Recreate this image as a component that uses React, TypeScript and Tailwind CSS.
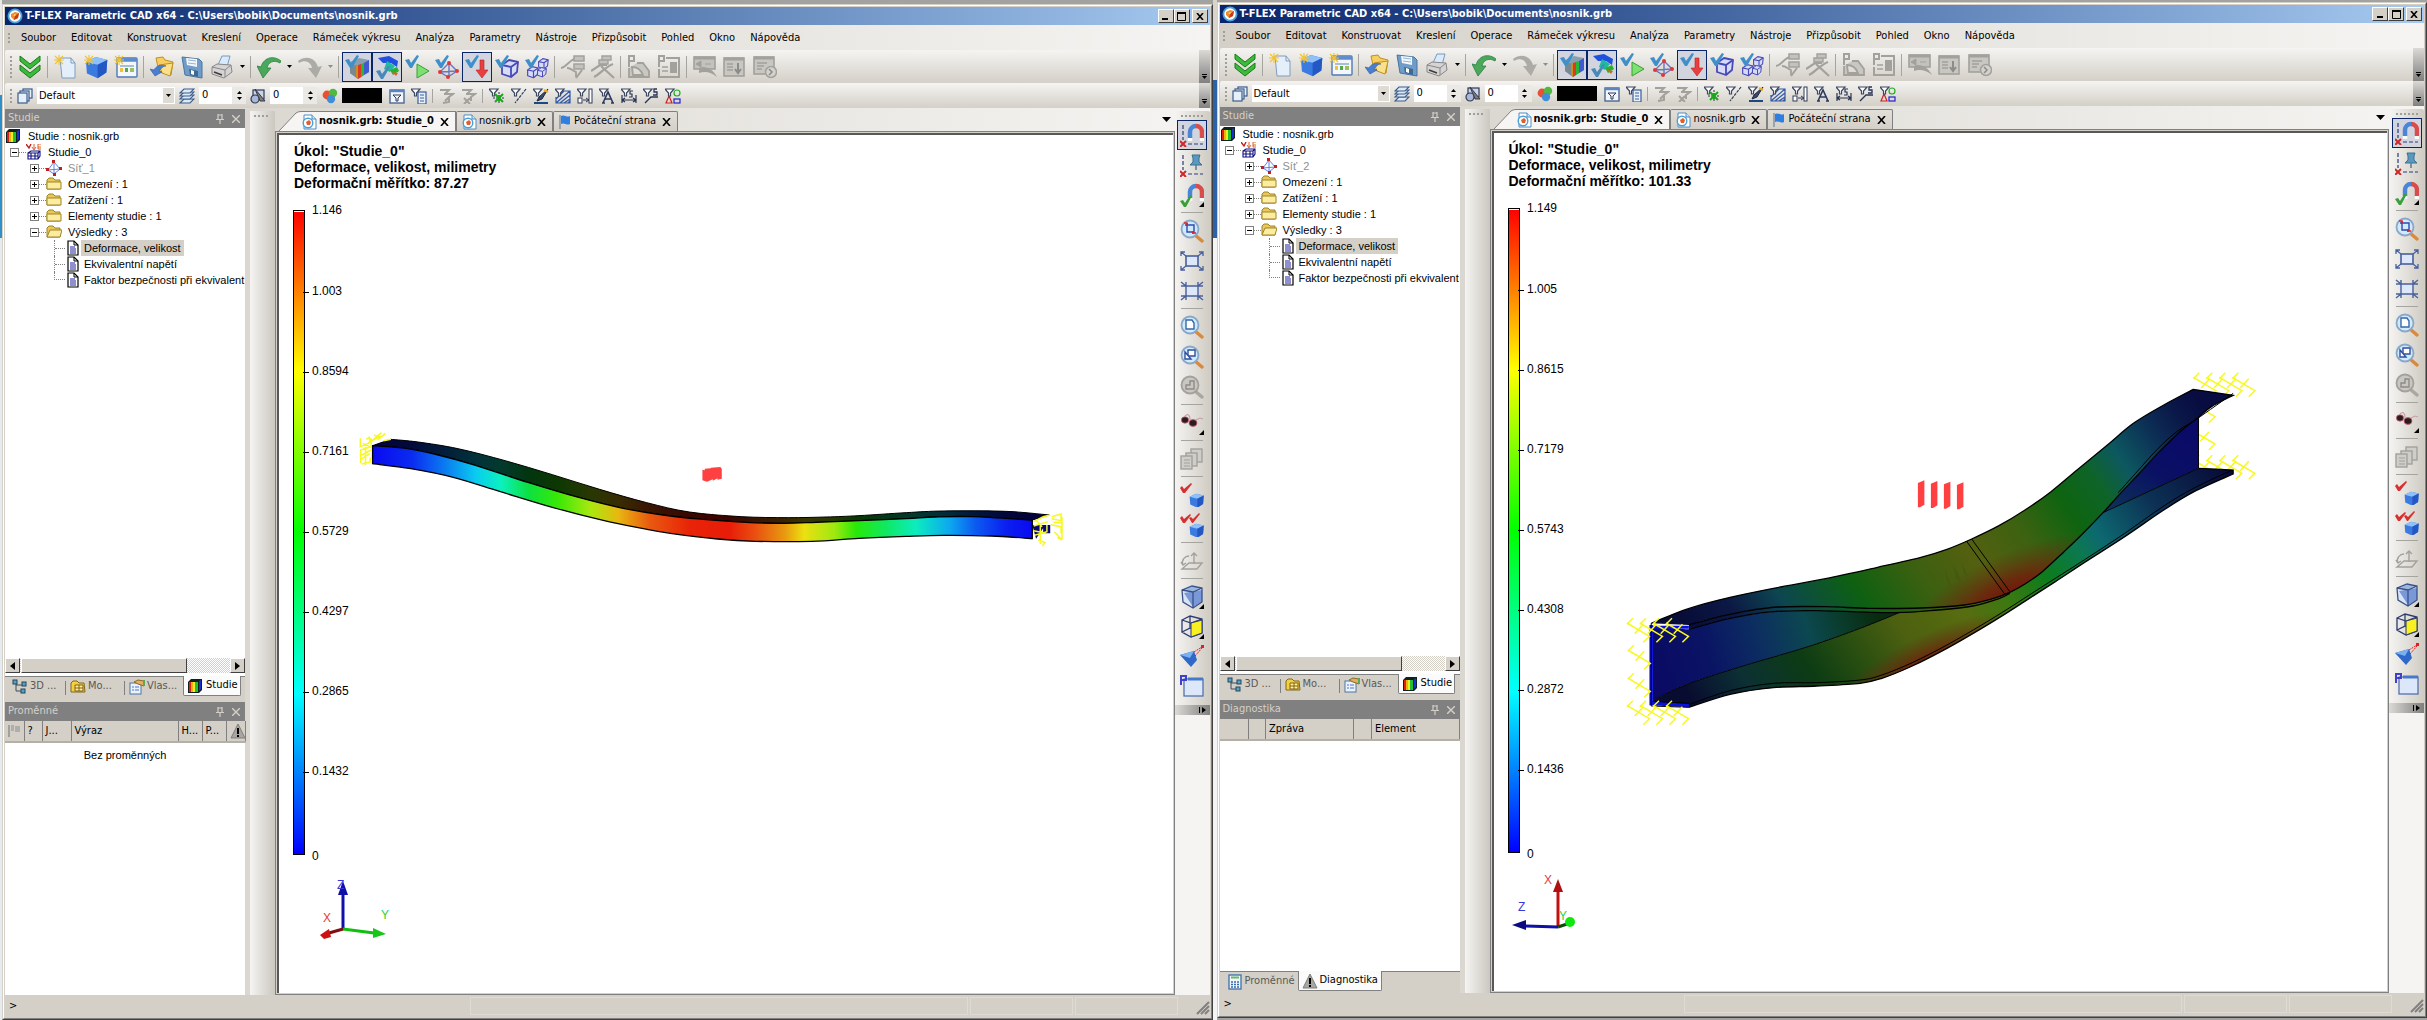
import React, { ReactNode } from "react";

/* ---------- icon helpers ---------- */

function Svg({ s = 24, children }: { s?: number; children: ReactNode }) {
  return (
    <svg width={s} height={s} viewBox={`0 0 ${s} ${s}`} fill="none" aria-hidden="true" className="shrink-0">
      {children}
    </svg>
  );
}

const Cube = ({ x = 0, y = 0, k = 1 }: { x?: number; y?: number; k?: number }) => (
  <g transform={`translate(${x} ${y}) scale(${k})`}>
    <path d="M1 6L11 1L23 4L22 17L13 23L2 18Z" fill="#3b7ae0" />
    <path d="M1 6L11 1L23 4L13 9Z" fill="#8fc0f8" />
    <path d="M13 9L23 4L22 17L13 23Z" fill="#2257c4" />
  </g>
);
const Spark = () => (
  <path d="M5 0V10M0 5H10M1 1L9 9M9 1L1 9" stroke="#f2c230" strokeWidth="1.1" />
);
const Check = ({ c = "#3f8fcb" }: { c?: string }) => (
  <path d="M0 5L4 4L6 8L12 0L14 1L7 13L5 13Z" fill={c} />
);
const Lens = ({ gray = false, children }: { gray?: boolean; children?: ReactNode }) => (
  <Svg>
    <path d="M15 16L22 22" stroke={gray ? "#a9a7a2" : "#d98a3c"} strokeWidth="3.4" strokeLinecap="round" />
    <circle cx="10" cy="10" r="8.5" fill={gray ? "#c9c7c2" : "#cfeafc"} stroke={gray ? "#a3a19c" : "#8aa6c8"} strokeWidth="1.8" />
    {children}
  </Svg>
);
const Magnet = () => (
  <g strokeWidth="4.5">
    <path d="M10 15V9A6 6 0 0 1 16 3" stroke="#4b86d6" />
    <path d="M22 15V9A6 6 0 0 0 16 3" stroke="#d84c4c" />
    <path d="M10 15V18M22 15V18" stroke="#fafafa" />
  </g>
);
const RedX = () => <path d="M0 18L6 24M6 18L0 24" stroke="#cc2a2a" strokeWidth="2" />;
const Guides = () => (
  <g stroke="#2c3a78" strokeWidth="1.2">
    <path d="M3 2V17" strokeDasharray="4 2" />
    <path d="M8 21H23" strokeDasharray="4 2" />
  </g>
);
const Corner = () => <path d="M24 19V24H19Z" fill="#000" />;

const AppIcon = ({ s = 16 }: { s?: number }) => (
  <svg width={s} height={s} viewBox="0 0 16 16" className="shrink-0" aria-hidden="true">
    <circle cx="8" cy="8" r="6.6" fill="#fff" stroke="#4aa0d8" strokeWidth="1.8" />
    <path d="M4 6L8 4L12 5L11 10L7 12L4 9Z" fill="#f08a2c" />
    <path d="M8 8L12 5L11 10L7 12Z" fill="#c8381c" />
    <path d="M6 7L9 6L8 8Z" fill="#ffe08a" />
  </svg>
);
const DocIcon = () => (
  <Svg s={16}>
    <path d="M3 1H11L15 5V15H3Z" fill="#fff" stroke="#4d8cc4" />
    <path d="M11 1V5H15" stroke="#4d8cc4" fill="#cfe6f8" />
    <circle cx="7" cy="9" r="4.8" fill="#fff" stroke="#4aa0d8" strokeWidth="1.4" />
    <path d="M5 8L8 6L10 8L9 11L6 11Z" fill="#e0602c" />
  </Svg>
);
const FlagIcon = () => (
  <Svg s={16}>
    <path d="M2 1V15" stroke="#8a98a8" strokeWidth="1.6" />
    <path d="M3 2C6 0 9 4 12 2V10C9 12 6 8 3 10Z" fill="#2f7fe0" />
  </Svg>
);
const RainbowCube = () => (
  <Svg s={16}>
    <path d="M1 4L4 1H15V12L12 15H1Z" fill="#102020" />
    <path d="M2 4H4V14H2Z" fill="#e02010" />
    <path d="M4 4H6V14H4Z" fill="#f0b010" />
    <path d="M6 4H8V14H6Z" fill="#e8f020" />
    <path d="M8 4H11V14H8Z" fill="#20c030" />
    <path d="M12 3L14 2V11L12 13Z" fill="#1830d0" />
  </Svg>
);

/* ---------- main toolbar icons ---------- */

const icoChevrons = (
  <Svg>
    <path d="M2 1L12 9L22 1V6L12 14L2 6Z" fill="#3cba3c" stroke="#1b7a1b" />
    <path d="M2 10L12 18L22 10V15L12 23L2 15Z" fill="#3cba3c" stroke="#1b7a1b" />
  </Svg>
);
const icoNew = (
  <Svg>
    <path d="M6 3H17L21 8V23H8Z" fill="#e4effa" stroke="#7f9cc0" />
    <path d="M17 3V8H21" stroke="#7f9cc0" />
    <Spark />
  </Svg>
);
const icoNewCube = (
  <Svg>
    <Cube x={1} y={1} k={0.97} />
    <Spark />
  </Svg>
);
const icoNewCal = (
  <Svg>
    <rect x="3" y="3" width="20" height="19" rx="1" fill="#f3f6fa" stroke="#4f79b4" strokeWidth="1.4" />
    <path d="M3 5H23" stroke="#5b8bd0" strokeWidth="3.5" />
    <path d="M6 11H20" stroke="#a9bdd6" strokeWidth="2" />
    <path d="M6 15H9" stroke="#f0c040" strokeWidth="4" />
    <path d="M11 15H14" stroke="#58a848" strokeWidth="4" />
    <path d="M16 15H20" stroke="#9ac060" strokeWidth="4" />
    <Spark />
  </Svg>
);
const icoOpen = (
  <Svg>
    <path d="M6 3L13 2L15 5L23 7L21 20L9 17Z" fill="#f6cf60" stroke="#c18f24" />
    <path d="M9 10L23 8L20 21L12 18Z" fill="#fbe08a" stroke="#c18f24" />
    <path d="M0 14L5 21L12 17L9 16C12 12 14 11 16 11C11 9 6 11 4 15Z" fill="#4a7fd0" stroke="#2c58a0" strokeWidth=".6" />
  </Svg>
);
const icoSave = (
  <Svg>
    <path d="M2 2L19 4L22 7V23L5 20Z" fill="#6f9cc8" stroke="#4b749e" />
    <path d="M6 3L17 4V12L7 10Z" fill="#f3f7fb" />
    <path d="M8 5L16 6M8 8L16 9" stroke="#9ab4cc" />
    <path d="M9 14L18 16V22L10 20Z" fill="#41688f" />
    <path d="M11 15L14 16V20L11 19Z" fill="#fff" />
  </Svg>
);
const icoPrint = (
  <Svg>
    <path d="M8 10L12 1H20L17 12Z" fill="#d8eafc" stroke="#7b98bb" />
    <path d="M2 12L7 9L21 10L22 17L14 23L2 19Z" fill="#d6d4d2" stroke="#87858a" />
    <path d="M2 12L15 15L21 10M15 15V22" stroke="#87858a" />
    <path d="M4 17L12 20" stroke="#3b3b40" strokeWidth="1.6" />
  </Svg>
);
const icoUndo = (
  <Svg>
    <path d="M6 23L0 11L4 12C6 4 15 -1 24 6L23 8C16 4 11 8 10 13L14 13Z" fill="#4aa85c" stroke="#2b7e3e" strokeWidth=".8" />
  </Svg>
);
const icoRedo = (
  <Svg>
    <path d="M18 23L24 11L20 12C18 4 9 -1 0 6L1 8C8 4 13 8 14 13L10 13Z" fill="#adaba6" />
  </Svg>
);
const icoCheckCube = (
  <Svg>
    <path d="M5 7L14 3L24 5V17L13 24L5 18Z" fill="#8aa0ae" />
    <path d="M5 9L13 11V24L5 18Z" fill="#7a8894" />
    <path d="M13 10L16 9V22L13 24Z" fill="#e03820" />
    <path d="M11 10L13 11V24L11 22Z" fill="#c89020" />
    <path d="M16 9L19 8V20L16 22Z" fill="#28b838" />
    <path d="M19 8L24 5V17L19 20Z" fill="#4058d0" />
    <Check />
  </Svg>
);
const icoCheckBeam = (
  <Svg>
    <path d="M3 3L14 1L23 6L22 12L16 8L8 8Z" fill="#1f50e0" />
    <path d="M12 6L20 11L15 17L9 14Z" fill="#20b8a0" />
    <path d="M15 15L22 12L24 16L18 20Z" fill="#28b030" />
    <path d="M17 17L23 18L21 21Z" fill="#e06020" />
    <g transform="translate(1 11)">
      <Check c="#4a88b8" />
    </g>
  </Svg>
);
const icoCheckPlay = (
  <Svg>
    <path d="M12 9L24 16L12 23Z" fill="#7ee070" stroke="#38a038" />
    <Check />
  </Svg>
);
const icoCheckMesh = (
  <Svg>
    <path d="M14 8L5 17L13 22L22 16ZM14 8V22M5 17L22 16" stroke="#6a76c0" strokeWidth="1.4" />
    <g fill="#e03838">
      <circle cx="14" cy="8" r="2" />
      <circle cx="5" cy="17" r="2" />
      <circle cx="13" cy="22" r="2" />
      <circle cx="22" cy="16" r="2" />
    </g>
    <Check />
  </Svg>
);
const icoCheckArrow = (
  <Svg>
    <path d="M15 5H19V15H23L17 23L11 15H15Z" fill="#e84040" stroke="#b82020" strokeWidth=".6" />
    <Check />
  </Svg>
);
const Wire = ({ x = 0, y = 0, k = 1 }: { x?: number; y?: number; k?: number }) => (
  <g transform={`translate(${x} ${y}) scale(${k})`} fill="#d4dcf6" stroke="#4a48b8" strokeWidth="1.8" strokeLinejoin="round">
    <path d="M1 6L8 1L17 3L16 13L10 18L1 15Z" />
    <path d="M1 6L10 8L17 3M10 8V18" />
  </g>
);
const icoCheckWire = (
  <Svg>
    <Wire x={6} y={4} />
    <Check />
  </Svg>
);
const icoCheckWires = (
  <Svg>
    <Wire x={13} y={3} k={0.6} />
    <Wire x={2} y={11} k={0.65} />
    <Wire x={12} y={12} k={0.55} />
    <Check />
  </Svg>
);
const G = "#a3a19c";
const icoG1 = (
  <Svg>
    <path d="M0 13C6 12 8 5 14 4M6 13C10 13 12 16 15 17V22" stroke={G} strokeWidth="1.8" />
    <path d="M13 1H23V6H13ZM13 9H23V14H13Z" fill="#c4c2bd" stroke={G} strokeWidth="1.5" />
    <path d="M21 15L15 23" stroke={G} strokeWidth="2" />
  </Svg>
);
const icoG2 = (
  <Svg>
    <path d="M11 1H20V5H11ZM8 5H17V9H8Z" fill="#c4c2bd" stroke={G} strokeWidth="1.4" />
    <path d="M0 16L9 10H16M3 22C8 20 14 12 22 9M10 11L23 23" stroke={G} strokeWidth="2.2" />
  </Svg>
);
const icoG3 = (
  <Svg>
    <path d="M2 12V1H7V6H2" stroke={G} strokeWidth="2" />
    <path d="M2 13V22H22V16L16 8H10M5 12C10 12 14 15 16 20H6Z" stroke={G} strokeWidth="1.8" fill="#c9c7c2" />
  </Svg>
);
const icoG4 = (
  <Svg>
    <path d="M2 12V1H7V6H2" stroke={G} strokeWidth="2" />
    <path d="M9 3H22V22H2V14" stroke={G} strokeWidth="2" />
    <path d="M13 7H20V18H13Z" fill={G} />
    <path d="M5 12H11M5 16H11" stroke={G} strokeWidth="1.5" />
  </Svg>
);
const icoG5 = (
  <Svg>
    <rect x="1" y="2" width="21" height="12" fill="#c4c2bd" stroke={G} strokeWidth="1.6" />
    <path d="M1 3H22" stroke={G} strokeWidth="3" />
    <path d="M3 9L8 6V12ZM12 9H18" stroke={G} fill={G} />
    <path d="M6 13C12 10 20 14 24 22C18 17 12 16 6 18Z" fill={G} />
  </Svg>
);
const icoG6 = (
  <Svg>
    <rect x="1" y="3" width="20" height="18" fill="#c9c7c2" stroke={G} strokeWidth="1.6" />
    <path d="M1 4H21" stroke={G} strokeWidth="3" />
    <path d="M4 9H10M4 12H10M4 15H10" stroke={G} strokeWidth="1.4" />
    <path d="M15 8V17M12 14L15 18L18 14" stroke="#8e8c88" strokeWidth="2" />
  </Svg>
);
const icoG7 = (
  <Svg>
    <rect x="1" y="2" width="20" height="17" fill="#c9c7c2" stroke={G} strokeWidth="1.6" />
    <path d="M1 3H21" stroke={G} strokeWidth="3" />
    <path d="M4 8H14M4 11H11M4 14H9" stroke={G} strokeWidth="1.4" />
    <circle cx="18" cy="17" r="5.5" fill="#d4d2cd" stroke={G} strokeWidth="1.5" />
    <path d="M16 14L19 17L16 20" stroke="#8e8c88" strokeWidth="1.5" />
  </Svg>
);

type Tool = { label: string; icon?: ReactNode; pressed?: boolean; menu?: boolean; off?: boolean; sep?: boolean };
const sep: Tool = { label: "", sep: true };

const MAIN_TOOLS: Tool[] = [
  { label: "Aktualizovat", icon: icoChevrons },
  sep,
  { label: "Nový", icon: icoNew },
  { label: "Nový 3D model", icon: icoNewCube },
  { label: "Nový z prototypu", icon: icoNewCal },
  sep,
  { label: "Otevřít", icon: icoOpen },
  { label: "Uložit", icon: icoSave },
  { label: "Tisk", icon: icoPrint, menu: true },
  sep,
  { label: "Zpět", icon: icoUndo, menu: true },
  { label: "Znovu", icon: icoRedo, menu: true, off: true },
  sep,
  { label: "Studie", icon: icoCheckCube, pressed: true },
  { label: "Výsledky", icon: icoCheckBeam, pressed: true },
  { label: "Výpočet", icon: icoCheckPlay },
  { label: "Síť", icon: icoCheckMesh },
  { label: "Zatížení", icon: icoCheckArrow, pressed: true },
  { label: "Těleso", icon: icoCheckWire },
  { label: "Tělesa", icon: icoCheckWires },
  sep,
  { label: "Strom", icon: icoG1, off: true },
  { label: "Zrušit strom", icon: icoG2, off: true },
  sep,
  { label: "Parametry plochy", icon: icoG3, off: true },
  { label: "Parametry okna", icon: icoG4, off: true },
  sep,
  { label: "Animace", icon: icoG5, off: true },
  { label: "Export", icon: icoG6, off: true },
  { label: "Historie", icon: icoG7, off: true },
];

/* ---------- filter toolbar icons ---------- */

const Funnel = ({ c = "#3c4660" }: { c?: string }) => (
  <path d="M0 1H9L5.5 5V8H3.5V5Z" stroke={c} strokeWidth="1.2" fill="#fff" />
);
const icoCopies = (
  <Svg s={16}>
    <g fill="#e6f0fa" stroke="#3c5c8c" strokeWidth="1.2">
      <rect x="6" y="1" width="9" height="9" />
      <rect x="3" y="3" width="9" height="10" />
      <rect x="1" y="5" width="9" height="10" />
    </g>
  </Svg>
);
const icoLayers = (
  <Svg s={16}>
    <g fill="#dceaf6" stroke="#3c5c8c" strokeWidth="1.1">
      <path d="M1 15L5 11H15L11 15Z" />
      <path d="M1 11L5 7H15L11 11Z" />
      <path d="M1 8L5 4H15L11 8Z" />
      <path d="M1 5L5 1H15L11 5Z" />
    </g>
  </Svg>
);
const icoShapes = (
  <Svg s={16}>
    <rect x="3" y="2" width="11" height="9" fill="#c8d4e8" stroke="#303a58" strokeWidth="1.2" />
    <path d="M5 1L15 13H10Z" fill="#8a7868" stroke="#303a58" />
    <circle cx="5" cy="11" r="4" fill="#a8b8d8" stroke="#303a58" strokeWidth="1.2" />
  </Svg>
);
const icoRgb = (
  <Svg s={16}>
    <circle cx="5" cy="7" r="4.4" fill="#e85030" />
    <circle cx="11" cy="5" r="4.2" fill="#50b840" />
    <circle cx="9" cy="11" r="4.2" fill="#3f8fd8" />
  </Svg>
);
const FILTERS: Tool[] = [
  {
    label: "Filtr okna",
    icon: (
      <Svg s={16}>
        <rect x="1" y="2" width="14" height="13" fill="#f2f6fb" stroke="#4a6894" strokeWidth="1.4" />
        <path d="M1 3H15" stroke="#5b84c0" strokeWidth="2.4" />
        <path d="M4 7H12L9 10V13H7V10Z" stroke="#303a58" />
      </Svg>
    ),
  },
  {
    label: "Seznam filtrů",
    icon: (
      <Svg s={16}>
        <rect x="7" y="4" width="8" height="12" fill="#e6f0fa" stroke="#3c5c9c" strokeWidth="1.2" />
        <path d="M9 7H13M9 10H13M9 13H13" stroke="#3c5c9c" />
        <Funnel />
      </Svg>
    ),
  },
  sep,
  { label: "Použít filtr", off: true, icon: <Svg s={16}><path d="M1 2H10L6 6M5 6H14L10 9V14L4 15M10 9L6 13" stroke={G} strokeWidth="2" /></Svg> },
  { label: "Vypnout filtr", off: true, icon: <Svg s={16}><path d="M1 2H10L6 6M5 6H14L10 9V13M3 10L9 16M9 10L3 16" stroke={G} strokeWidth="2" /></Svg> },
  sep,
  { label: "Uzly", icon: <Svg s={16}><Funnel /><path d="M10 4V16M4 10H16" stroke="#283048" strokeDasharray="2 1" /><path d="M6 6L14 14M14 6L6 14M10 7V13" stroke="#18a818" strokeWidth="2" /></Svg> },
  { label: "Čáry", icon: <Svg s={16}><Funnel /><path d="M15 1L4 15" stroke="#303a58" strokeWidth="1.2" strokeDasharray="3 1" /></Svg> },
  { label: "Grafika", icon: <Svg s={16}><Funnel /><path d="M15 1L6 9L4 13L9 11Z" fill="#3a4a70" stroke="#202838" /><path d="M11 2L15 4" stroke="#f0b020" strokeWidth="2" /><path d="M1 15H15" stroke="#1c4884" strokeWidth="2" /></Svg> },
  { label: "Šrafy", icon: <Svg s={16}><path d="M2 3H15V15H1V9M1 15L15 3M5 15L15 7M9 15L15 11M1 11L9 3M13 15L15 13" stroke="#3058a8" strokeWidth="1.2" /><Funnel /></Svg> },
  { label: "Kóty bloku", icon: <Svg s={16}><Funnel /><rect x="12" y="1" width="3" height="14" stroke="#303a58" fill="#fff" /><rect x="1" y="10" width="4" height="5" stroke="#303a58" fill="#fff" /><path d="M6 12H12M9 10L12 12L9 14" stroke="#303a58" /></Svg> },
  { label: "Texty", icon: <Svg s={16}><path d="M4 15L9 4L14 15M6 11H12M3 15H6M12 15H15" stroke="#2c3a60" strokeWidth="1.6" /><Funnel /></Svg> },
  { label: "Kóty", icon: <Svg s={16}><path d="M1 7V15M15 7V15M1 12H15M4 10L1 12L4 14M12 10L15 12L12 14M12 3H9V6H11V9H8" stroke="#283454" strokeWidth="1.2" /><Funnel /></Svg> },
  { label: "Drsnost", icon: <Svg s={16}><path d="M2 15L8 9H15M14 1H11V4H14V7H10" stroke="#283454" strokeWidth="1.3" /><Funnel /></Svg> },
  { label: "Prvky", icon: <Svg s={16}><path d="M4 8L7 15H1Z" stroke="#d02020" strokeWidth="1.2" /><rect x="9" y="11" width="6" height="4" stroke="#2020d0" strokeWidth="1.2" /><circle cx="12" cy="5" r="3" stroke="#20b020" strokeWidth="1.2" /><Funnel /></Svg> },
];

/* ---------- view toolbar icons ---------- */

const VIEW_TOOLS: Tool[] = [
  { label: "Přichycení", pressed: true, icon: <Svg><Guides /><Magnet /><RedX /></Svg> },
  { label: "Připnout", icon: <Svg><Guides /><path d="M12 2H20L19 5V9L22 12H10L13 9V5Z" fill="#5a98c0" stroke="#3c7090" /><path d="M16 12V17" stroke="#607888" strokeWidth="1.5" /><RedX /></Svg> },
  { label: "Nastavení přichycení", icon: <Svg><Magnet /><path d="M0 18L3 17L5 20L10 12L12 13L6 24L4 24Z" fill="#38a038" /><Corner /></Svg> },
  sep,
  { label: "Zvětšit oblast", icon: <Lens><path d="M5 6H14V13H7V4" stroke="#3048b0" strokeWidth="1.4" /><path d="M4 4H7V7M13 12V15M16 14L12 14" stroke="#e02020" strokeWidth="1.4" /></Lens> },
  { label: "Vše", icon: <Svg><rect x="6" y="7" width="12" height="10" fill="#dce8fa" stroke="#48609c" strokeWidth="1.6" /><path d="M1 7V3H5M1 3L6 7M19 3H23V7M23 3L18 7M1 17V21H5M1 21L6 17M19 21H23V17M23 21L18 17" stroke="#48609c" strokeWidth="1.3" /></Svg> },
  { label: "Výběr", icon: <Svg><rect x="6" y="7" width="12" height="10" fill="#dce8fa" /><path d="M1 7H23M1 17H23M6 3V21M18 3V21M1 3L6 7M23 3L18 7M1 21L6 17M23 21L18 17" stroke="#48609c" strokeWidth="1.4" /></Svg> },
  sep,
  { label: "Stránka", icon: <Lens><path d="M6 5H12L14 8V14H6Z" fill="#fff" stroke="#3868a8" strokeWidth="1.4" /></Lens> },
  { label: "Objekty", icon: <Lens><path d="M8 5H15V11H8Z" fill="#fff" stroke="#30509c" strokeWidth="1.4" /><path d="M5 7V14H11Z" fill="#fff" stroke="#30509c" strokeWidth="1.4" /></Lens> },
  { label: "Předchozí", off: true, icon: <Lens gray><path d="M6 14V10H10V6H14V14Z" stroke="#8e8c88" strokeWidth="1.4" /></Lens> },
  sep,
  { label: "Pohled", icon: <Svg><ellipse cx="5" cy="9" rx="3.6" ry="3.2" fill="#2a1c20" stroke="#d06070" strokeWidth=".8" /><ellipse cx="13" cy="12" rx="4" ry="3.4" fill="#2a1c20" stroke="#d06070" strokeWidth=".8" /><path d="M5 5C8 2 10 4 10 9M16 9L20 7L23 8" stroke="#c8a0a4" strokeWidth="1.1" /><Corner /></Svg> },
  sep,
  { label: "Stránky", off: true, icon: <Svg><g fill="#d0cec9" stroke={G} strokeWidth="1.4"><rect x="11" y="2" width="11" height="13" /><rect x="6" y="6" width="11" height="13" /><rect x="1" y="9" width="11" height="13" /></g><path d="M4 13H10M4 16H10M4 19H10" stroke={G} /></Svg> },
  sep,
  { label: "Přepočítat", icon: <Svg><Cube x={9} y={10} k={0.64} /><path d="M0 5L2 3L4 6L11 0L12 1L5 10L3 10Z" fill="#d83030" /></Svg> },
  { label: "Přepočítat vše", icon: <Svg><Cube x={9} y={10} k={0.64} /><path d="M0 5L2 3L4 6L10 1L11 2L5 10L3 10ZM9 5L11 4L13 6L19 0L20 1L13 10L12 10Z" fill="#d83030" /></Svg> },
  sep,
  { label: "Pracovní rovina", off: true, icon: <Svg><path d="M2 20L9 14H22L17 20ZM14 15V4M11 7L14 4L17 7M3 16C1 11 5 7 9 7M1 13L3 16L6 14" stroke={G} strokeWidth="1.4" /></Svg> },
  sep,
  { label: "Stínování", icon: <Svg><path d="M2 5L12 1L22 3V17L13 23L3 17Z" fill="#d8e4f4" /><path d="M4 8L22 5V17L13 22Z" fill="#7898d8" /><path d="M2 5L12 1L22 3L13 7Z" fill="#98b8e0" /><path d="M2 5L12 1L22 3V17L13 23L3 17ZM2 5L13 7L22 3M13 7V23" stroke="#3c5088" strokeWidth="1.3" /><Corner /></Svg> },
  { label: "Plocha", icon: <Svg><path d="M2 5L10 1L22 4V18L11 22L2 17ZM2 5L11 8L22 4M10 1V13L2 17M10 13L22 18" stroke="#2c3a70" strokeWidth="1.3" /><path d="M11 8L22 5V18L11 22Z" fill="#f8f020" stroke="#2c3a70" /><Corner /></Svg> },
  { label: "Kamera", icon: <Svg><path d="M0 10L14 6L17 15L11 22Z" fill="#2f68c8" /><path d="M0 10L14 6L10 13Z" fill="#78b0f0" /><path d="M14 7L22 2M15 11L22 3" stroke="#e02020" strokeDasharray="2 1" /><path d="M21 0H24V3H21Z" fill="#e02020" /></Svg> },
  { label: "Nové okno", icon: <Svg><rect x="4" y="4" width="19" height="17" fill="#dce8fa" stroke="#4868a8" strokeWidth="1.2" /><path d="M8 4H23" stroke="#4878c8" strokeWidth="3" /><path d="M1 10V1H6V5H2" stroke="#4040d0" strokeWidth="2" /></Svg> },
];

/* ---------- small chrome pieces ---------- */

const Down = ({ off = false }: { off?: boolean }) => (
  <svg width="5" height="3" viewBox="0 0 5 3" aria-hidden="true">
    <path d="M0 0H5L2.5 3Z" fill={off ? "#908e88" : "#000"} />
  </svg>
);

function Grip({ rows }: { rows: number }) {
  return (
    <span className="flex w-2 shrink-0 flex-col items-center justify-center gap-[2px]">
      {Array.from({ length: rows }, (_, i) => (
        <i key={i} className="h-[2px] w-[2px] bg-[#a09e98]" />
      ))}
    </span>
  );
}

function ToolButton({ t }: { t: Tool }) {
  return (
    <>
      <button
        type="button"
        title={t.label}
        aria-label={t.label}
        disabled={t.off}
        className={
          t.pressed
            ? "flex size-[30px] shrink-0 items-center justify-center border border-[#0a246a] bg-[#d2d5de]"
            : "flex size-[30px] shrink-0 items-center justify-center"
        }
      >
        {t.icon}
      </button>
      {t.menu && (
        <button type="button" aria-label={t.label + " – nabídka"} disabled={t.off} className="flex h-[30px] w-[11px] shrink-0 items-center justify-center">
          <Down off={t.off} />
        </button>
      )}
    </>
  );
}

function Overflow() {
  return (
    <button type="button" aria-label="Další tlačítka" className="ml-auto flex w-[11px] shrink-0 flex-col items-center justify-end gap-px bg-linear-to-b from-[#dcdad6] to-[#808080] pb-1">
      <i className="h-px w-[5px] bg-black" />
      <Down />
    </button>
  );
}

const MENU = ["Soubor", "Editovat", "Konstruovat", "Kreslení", "Operace", "Rámeček výkresu", "Analýza", "Parametry", "Nástroje", "Přizpůsobit", "Pohled", "Okno", "Nápověda"];
const BAR = "bg-linear-to-b from-[#f5f4f2] to-[#d4d0c8]";

function TitleBar() {
  const btn = "flex h-[14px] w-4 items-center justify-center border border-t-white border-l-white border-r-[#404040] border-b-[#404040] bg-[#d4d0c8]";
  return (
    <header className="flex h-[18px] items-center bg-linear-to-r from-[#0a246a] to-[#a6caf0] pr-[2px] pl-[2px]">
      <AppIcon />
      <h1 className="ml-[2px] flex-1 text-[11px] leading-[18px] font-bold whitespace-nowrap text-white">
        T-FLEX Parametric CAD x64 - C:\Users\bobik\Documents\nosnik.grb
      </h1>
      <button type="button" aria-label="Minimalizovat" className={btn}>
        <svg width="9" height="8" viewBox="0 0 9 8"><path d="M1 6H7V8H1Z" /></svg>
      </button>
      <button type="button" aria-label="Maximalizovat" className={btn}>
        <svg width="9" height="9" viewBox="0 0 9 9"><path d="M.5 1V8.500H8.500V1M0 1H9" fill="none" stroke="#000" /><path d="M0 0H9V2H0Z" /></svg>
      </button>
      <button type="button" aria-label="Zavřít" className={btn + " ml-[2px]"}>
        <svg width="8" height="7" viewBox="0 0 8 7"><path d="M1 0L7 7M7 0L1 7" stroke="#000" strokeWidth="1.6" /></svg>
      </button>
    </header>
  );
}

function Spin({ label }: { label: string }) {
  return (
    <label className="flex h-[17px] w-[47px] bg-white">
      <input aria-label={label} defaultValue="0" className="w-[33px] bg-transparent pl-[3px] text-[11px] outline-none" />
      <span className="flex w-[14px] flex-col items-center justify-center gap-[3px] bg-[#ebe9e5]">
        <svg width="5" height="3" viewBox="0 0 5 3"><path d="M0 3H5L2.500 0Z" /></svg>
        <Down />
      </span>
    </label>
  );
}

function FilterBar() {
  return (
    <div className={"flex h-[25px] items-stretch rounded-l-xs pl-[2px] " + BAR}>
      <Grip rows={4} />
      <div className="flex items-center pl-[2px]">
        {icoCopies}
        <span className="relative ml-1 flex h-[17px] w-[138px] bg-white">
          <select aria-label="Styl" className="w-full appearance-none bg-transparent pl-[2px] text-[11px] leading-[17px] outline-none">
            <option>Default</option>
          </select>
          <span className="pointer-events-none absolute inset-y-0 right-0 flex w-[13px] items-center justify-center border border-white bg-[#dedbd5]">
            <Down />
          </span>
        </span>
        <span className="mx-1">{icoLayers}</span>
        <Spin label="Vrstva" />
        <span className="mx-1">{icoShapes}</span>
        <Spin label="Priorita" />
        <span className="mr-1 ml-[5px]">{icoRgb}</span>
        <button type="button" aria-label="Barva" className="mr-1 h-[15px] w-10 bg-black" />
        {FILTERS.map((t, i) =>
          t.sep ? (
            <i key={i} className="mr-[3px] ml-[2px] h-[14px] w-px bg-[#a6a49e]" />
          ) : (
            <button key={i} type="button" title={t.label} aria-label={t.label} disabled={t.off} className="flex size-[22px] items-center justify-center">
              {t.icon}
            </button>
          ),
        )}
      </div>
      <Overflow />
    </div>
  );
}

function PanelCaption({ title }: { title: string }) {
  return (
    <div className="flex h-[19px] shrink-0 items-center bg-[#808080] pr-[5px] pl-[3px] text-[11px] text-[#d4d0c8]">
      <h2 className="flex-1">{title}</h2>
      <button type="button" aria-label="Připnout panel" className="mr-2">
        <svg width="8" height="10" viewBox="0 0 8 10" fill="none" stroke="#d4d0c8" strokeWidth="1.2"><path d="M2 0V5M6 0V5M2 1H6M0 5.500H8M4 6V10" /></svg>
      </button>
      <button type="button" aria-label="Zavřít panel">
        <svg width="8" height="8" viewBox="0 0 8 8" stroke="#d4d0c8" strokeWidth="1.4"><path d="M0 0L8 8M8 0L0 8" /></svg>
      </button>
    </div>
  );
}

/* ---------- study tree ---------- */

function Expander({ open }: { open?: boolean }) {
  return (
    <span className="flex items-center">
      <button type="button" aria-label={open ? "Sbalit" : "Rozbalit"} className="flex size-[9px] items-center justify-center border border-[#808080] bg-white">
        <svg width="5" height="5" viewBox="0 0 5 5"><path d={open ? "M0 2H5V3H0Z" : "M0 2H5V3H0ZM2 0H3V5H2Z"} /></svg>
      </button>
      <i className="w-[7px] border-t border-dotted border-[#808080]" />
    </span>
  );
}
const Folder = ({ open = false }: { open?: boolean }) => (
  <Svg s={16}>
    <path d="M1 13V4L3 2H7L9 4H14V13Z" fill="#e8c858" stroke="#a08428" />
    <path d={open ? "M1 13L4 6H16L14 13Z" : "M1 13V6H15V13Z"} fill="#fbeca0" stroke="#a08428" />
  </Svg>
);
const MeshIcon = () => (
  <Svg s={16}>
    <path d="M8 2L2 10L8 14L14 9ZM8 2V14M2 10L14 9" stroke="#6080e0" />
    <path d="M6 0H9V3H6ZM0 8H3V11H0ZM7 13H10V16H7ZM13 7H16V10H13Z" fill="#c02020" />
  </Svg>
);
const StudyIcon = () => (
  <Svg s={16}>
    <path d="M2 9L5 7H14V12L12 15H2ZM2 12H12M5 9V15M9 9V15M2 9H12L14 7M12 9V15" stroke="#101080" strokeWidth="1.1" />
    <path d="M0 0L3 4L5 0" stroke="#c02020" strokeWidth="1.4" />
    <path d="M8 0V5M6 3L8 6L10 3" stroke="#e06020" />
    <path d="M15 0H12V5H15M12 3H15" stroke="#e06020" />
  </Svg>
);
const PageIcon = () => (
  <Svg s={16}>
    <path d="M3 1H9L13 5V15H3Z" fill="#fff" stroke="#000" strokeWidth="1.2" />
    <path d="M9 1V5H13" stroke="#000" />
    <path d="M5 7H10M5 9H11M5 11H11M5 13H11" stroke="#2020a0" />
  </Svg>
);

function StudyTree({ mesh }: { mesh: string }) {
  const row = "flex h-4 items-center whitespace-nowrap";
  const groups = ["Omezení : 1", "Zatížení : 1", "Elementy studie : 1"];
  return (
    <ul className="min-h-0 flex-1 overflow-hidden bg-white pb-2 font-['Liberation_Sans',sans-serif] text-[11px] leading-4">
      <li className={row}>
        <RainbowCube />
        <span className="ml-[7px]">Studie : nosnik.grb</span>
      </li>
      <li className="pl-[5px]">
        <div className={row}>
          <Expander open />
          <StudyIcon />
          <span className="ml-[6px]">Studie_0</span>
        </div>
        <ul className="ml-1">
          <li className="ml-4">
            <div className={row}>
              <Expander />
              <MeshIcon />
              <span className="ml-[6px] text-[#909090]">{mesh}</span>
            </div>
          </li>
          {groups.map((g) => (
            <li key={g} className="ml-4">
              <div className={row}>
                <Expander />
                <Folder />
                <span className="ml-[6px]">{g}</span>
              </div>
            </li>
          ))}
          <li className="ml-4">
            <div className={row}>
              <Expander open />
              <Folder open />
              <span className="ml-[6px]">Výsledky : 3</span>
            </div>
            <ul className="ml-6">
              {["Deformace, velikost", "Ekvivalentní napětí", "Faktor bezpečnosti při ekvivalent"].map((r, i) => (
                <li key={r} className="flex h-4 items-center whitespace-nowrap">
                  <span className={i === 2 ? "h-2 w-[11px] shrink-0 self-start border-b border-l border-dotted border-[#808080]" : "flex h-4 w-[11px] shrink-0 items-center border-l border-dotted border-[#808080]"}>
                    {i < 2 && <i className="w-full border-t border-dotted border-[#808080]" />}
                  </span>
                  <PageIcon />
                  <span className={i === 0 ? "bg-[#d4d0c8] px-[3px]" : "pl-[3px]"}>{r}</span>
                </li>
              ))}
            </ul>
          </li>
        </ul>
      </li>
    </ul>
  );
}

function HScroll() {
  const b = "flex size-[15px] shrink-0 items-center justify-center border border-t-white border-l-white border-r-[#404040] border-b-[#404040] bg-[#d4d0c8]";
  return (
    <div className="flex h-[15px] shrink-0 bg-[repeating-conic-gradient(#fff_0_25%,#d4d0c8_0_50%)] bg-[length:2px_2px]">
      <button type="button" aria-label="Posunout vlevo" className={b}>
        <svg width="5" height="8" viewBox="0 0 5 8"><path d="M5 0V8L0 4Z" /></svg>
      </button>
      <span className="ml-px w-[166px] border border-t-white border-l-white border-r-[#404040] border-b-[#404040] bg-[#d4d0c8]" />
      <button type="button" aria-label="Posunout vpravo" className={b + " ml-auto"}>
        <svg width="5" height="8" viewBox="0 0 5 8"><path d="M0 0V8L5 4Z" /></svg>
      </button>
    </div>
  );
}

const Tree3D = () => (
  <Svg s={16}>
    <path d="M4 4V12H10M4 6H11" stroke="#404858" />
    <g fill="#58a0c8" stroke="#204858">
      <rect x="1" y="1" width="4" height="4" />
      <rect x="10" y="3" width="4" height="4" />
      <rect x="9" y="10" width="4" height="4" />
    </g>
  </Svg>
);
const ModelIcon = () => (
  <Svg s={16}>
    <path d="M1 4L3 2H7L9 4H14L15 13H1Z" fill="#f4d040" stroke="#806818" />
    <path d="M5 6H13V12H5ZM9 6V12M5 9H13" stroke="#806010" fill="#fff0a0" />
  </Svg>
);
const PropsIcon = () => (
  <Svg s={16}>
    <rect x="1" y="4" width="11" height="11" fill="#eaf2fa" stroke="#4a74a8" />
    <path d="M3 8H5M6 8H10M3 11H5M6 11H10" stroke="#4a74d8" />
    <path d="M5 3L9 1L15 2V7L9 5Z" fill="#e0b060" stroke="#906828" />
    <path d="M14 1H16V7H14Z" fill="#58a858" />
  </Svg>
);
const WarnIcon = () => (
  <Svg s={16}>
    <path d="M8 1L15 15H1Z" fill="#a8a6a2" stroke="#807e7a" />
    <path d="M8 5V11M8 12V14" stroke="#000" strokeWidth="2" />
  </Svg>
);
const CalcIcon = () => (
  <Svg s={16}>
    <rect x="2" y="1" width="12" height="14" fill="#f0f6fc" stroke="#4878b0" strokeWidth="1.4" />
    <path d="M4 3.500H12" stroke="#68b868" strokeWidth="2" />
    <path d="M4 8H12M4 10.500H12M4 13H12" stroke="#3868a8" strokeWidth="1.5" strokeDasharray="2 1" />
  </Svg>
);

function DockTabs() {
  const t = "flex h-[19px] items-center gap-[2px] text-[11px] text-[#5a5854]";
  return (
    <div className="flex h-[26px] shrink-0 items-start border-t border-[#808080] pl-[7px]">
      <button type="button" className={t + " w-[53px]"}><Tree3D />3D ...</button>
      <i className="mt-1 h-[14px] w-px bg-[#808080]" />
      <button type="button" className={t + " w-[58px] pl-1"}><ModelIcon />Mo...</button>
      <i className="mt-1 h-[14px] w-px bg-[#808080]" />
      <button type="button" className={t + " w-[58px] pl-1"}><PropsIcon />Vlas...</button>
      <button type="button" className="-mt-px flex h-5 items-center gap-[3px] rounded-b-xs border border-t-0 border-[#808080] bg-[#fbfbfb] pr-[2px] pl-[3px] text-[11px]">
        <RainbowCube />
        Studie
      </button>
    </div>
  );
}

function HeaderTable({ cols }: { cols: { w: string; c: ReactNode }[] }) {
  return (
    <table className="w-full table-fixed border-collapse bg-[#d4d0c8] text-[11px]">
      <thead>
        <tr className="h-[21px] border-b-2 border-[#b4b0a8]">
          {cols.map((c, i) => (
            <th key={i} className={"h-[19px] border-r border-[#808080] p-0 pl-[3px] text-left font-normal whitespace-nowrap " + c.w}>
              {c.c}
            </th>
          ))}
        </tr>
      </thead>
    </table>
  );
}

function VariablesPanel() {
  return (
    <section className="flex h-[293px] flex-col">
      <PanelCaption title="Proměnné" />
      <HeaderTable
        cols={[
          { w: "w-[19px]", c: <svg width="12" height="14" viewBox="0 0 12 14" role="img" aria-label="Skupina"><path d="M1 1V13" stroke="#a0a09c" strokeWidth="2" /><path d="M3 1H6V7H3ZM7 2H12V8H7Z" fill="#b0aeaa" /></svg> },
          { w: "w-[18px]", c: "?" },
          { w: "w-[29px]", c: "J..." },
          { w: "w-[107px]", c: "Výraz" },
          { w: "w-6", c: "H..." },
          { w: "w-6", c: "P..." },
          { w: "w-[19px] pl-0", c: <WarnIcon /> },
        ]}
      />
      <p className="flex-1 bg-white pt-1 text-center font-['Liberation_Sans',sans-serif] text-[11px] leading-4">Bez proměnných</p>
    </section>
  );
}

function DiagnosticsPanel() {
  return (
    <section className="flex h-[293px] flex-col">
      <PanelCaption title="Diagnostika" />
      <HeaderTable
        cols={[
          { w: "w-[29px]", c: "" },
          { w: "w-[17px]", c: "" },
          { w: "w-[88px]", c: "Zpráva" },
          { w: "w-[18px]", c: "" },
          { w: "w-[88px]", c: "Element" },
        ]}
      />
      <div className="flex-1 bg-white" />
      <div className="flex h-[22px] items-start border-t border-[#808080] pl-[7px] text-[11px]">
        <button type="button" className="flex h-[19px] w-[71px] items-center gap-[2px] text-[#5a5854]"><CalcIcon />Proměnné</button>
        <button type="button" className="-mt-px flex h-5 items-center gap-[2px] rounded-b-xs border border-t-0 border-[#808080] bg-[#fbfbfb] px-[3px]"><WarnIcon />Diagnostika</button>
      </div>
    </section>
  );
}

/* ---------- document tabs ---------- */

function DocTabs() {
  const x = (
    <svg width="9" height="8" viewBox="0 0 9 8" stroke="#000" strokeWidth="1.6" aria-hidden="true"><path d="M1 0L8 8M8 0L1 8" /></svg>
  );
  const tab = "flex h-5 items-center rounded-t-xs border border-b-0 border-[#808080] bg-linear-to-b from-[#e2dfda] to-[#d4d0c8] pl-1 text-[11px]";
  return (
    <div className="flex h-[22px] items-end pl-1">
      <svg width="22" height="20" viewBox="0 0 22 20" className="shrink-0" aria-hidden="true">
        <path d="M0 20L17 2Q19 .5 22 .5V20Z" fill="#f6f5f3" />
        <path d="M0 20L17 2Q19 .5 22 .5" fill="none" stroke="#808080" />
      </svg>
      <div className="flex h-5 items-center border-t border-r border-[#808080] bg-[#f6f5f3] text-[11px] font-bold">
        <DocIcon />
        <span className="ml-[2px] whitespace-nowrap">nosnik.grb: Studie_0</span>
        <button type="button" aria-label="Zavřít kartu" className="mx-[6px]">{x}</button>
      </div>
      <div className={tab}>
        <DocIcon />
        <span className="ml-[2px]">nosnik.grb</span>
        <button type="button" aria-label="Zavřít kartu" className="mx-[6px]">{x}</button>
      </div>
      <div className={tab}>
        <FlagIcon />
        <span>Počáteční strana</span>
        <button type="button" aria-label="Zavřít kartu" className="mx-[6px]">{x}</button>
      </div>
      <button type="button" aria-label="Seznam oken" className="mr-1 mb-[9px] ml-auto">
        <svg width="9" height="5" viewBox="0 0 9 5"><path d="M0 0H9L4.500 5Z" /></svg>
      </button>
    </div>
  );
}

/* ---------- result plots ---------- */

type Pt = [number, number];
const pts = (s: string): Pt[] => s.split(" ").map((p) => p.split(",").map(Number) as Pt);
const rev = (s: string) => s.split(" ").reverse().join(" ");

/** Joins point lists into one path; each list is a smooth Catmull-Rom curve, with corners between lists. */
function curve(...lists: string[]) {
  return lists
    .map((s, n) => {
      const p = pts(s);
      let d = `${n ? "L" : "M"}${p[0][0]} ${p[0][1]}`;
      for (let i = 0; i < p.length - 1; i++) {
        const a = p[i - 1] ?? p[i];
        const b = p[i];
        const c = p[i + 1];
        const e = p[i + 2] ?? c;
        d += `C${b[0] + (c[0] - a[0]) / 6} ${b[1] + (c[1] - a[1]) / 6} ${c[0] - (e[0] - b[0]) / 6} ${c[1] - (e[1] - b[1]) / 6} ${c[0]} ${c[1]}`;
      }
      return d;
    })
    .join("");
}

const BEAM_STOPS: [number, string][] = [
  [0, "#0a0af0"], [0.06, "#0a2cf0"], [0.11, "#0a7cf0"], [0.157, "#0accf0"], [0.194, "#0cf0c0"], [0.237, "#0ce040"],
  [0.28, "#38e808"], [0.33, "#a8e810"], [0.372, "#e8b810"], [0.42, "#e85a10"], [0.48, "#e82408"], [0.54, "#e81c08"],
  [0.58, "#e85010"], [0.625, "#e89a10"], [0.654, "#ece010"], [0.7, "#a0e810"], [0.733, "#28e808"], [0.777, "#10e860"],
  [0.824, "#0cecc0"], [0.875, "#0ca8f0"], [0.913, "#0c5cf0"], [0.96, "#0a20f0"], [1, "#0a0af0"],
];
const stops = (list: [number, string][]) => list.map(([o, c]) => <stop key={o} offset={o} stopColor={c} />);

const LINE = { fill: "none", stroke: "#000", strokeWidth: 1.3, vectorEffect: "non-scaling-stroke" as const };
const YEL = { fill: "none", stroke: "#f8f820", strokeWidth: 1.5, vectorEffect: "non-scaling-stroke" as const };

function SideBeam() {
  const top = "69,137 140,145 200,162 280,193 400,248 500,290 600,325 700,348 770,358 860,367 940,370 1010,367 1100,362 1200,356 1260,351 1340,350 1467,360";
  const bottom = "1467,416 1380,408 1280,406 1200,409 1100,415 1000,424 880,424 800,417 700,400 640,385 560,362 450,322 340,275 240,232 150,206 69,191";
  const back = "1503,345 1410,334 1280,333 1200,338 1100,347 1030,351 950,353 850,350 740,336 650,308 550,268 450,224 350,182 250,146 165,126 107,118";
  return (
    <g transform="translate(61 265) scale(.4719 .3333)">
      <defs>
        <linearGradient id="beam-face" gradientUnits="userSpaceOnUse" x1="69" y1="0" x2="1467" y2="0">{stops(BEAM_STOPS)}</linearGradient>
      </defs>
      <path d="M1467 375H1505V400H1490V385L1475 416Z" fill="#080870" />
      <path d={curve(top, back) + "Z"} fill="url(#beam-face)" />
      <path d={curve(top, back) + "Z"} fill="#000" fillOpacity=".76" stroke="#000" vectorEffect="non-scaling-stroke" />
      <path d={curve(top, bottom) + "Z"} fill="url(#beam-face)" stroke="#000" strokeWidth="1.3" vectorEffect="non-scaling-stroke" />
      <path d="M765 357L790 343M780 359L815 346" {...LINE} stroke="#400" />
      <path d="M768 209L773 211V206L786 205V203L806 201L809 206V236L800 239V235L790 242V238L778 245L768 241Z" fill="#ff4040" />
      <path d="M43 115V140L60 130L66 122M48 130L66 142V115M56 118L62 112L64 125L84 110L72 106M68 122L88 98M80 120L96 100M92 122L108 118M44 150L62 142M46 165L66 150M44 178L64 160M46 192L64 186V172M44 148V190M54 140V195" {...YEL} />
      <path d="M1470 365L1490 350L1505 345M1476 362L1488 380M1470 378L1500 365M1508 350L1528 342V362L1508 356M1512 366L1530 370M1506 374L1528 380V400M1514 395L1530 420L1520 412M1530 350V418M1470 392L1496 400M1472 406L1498 395V375M1480 420L1494 428L1488 438M1484 370V432" {...YEL} />
    </g>
  );
}

function Support({ x, y }: { x: number; y: number }) {
  return <path d={`M${x} ${y + 18}L${x + 14} ${y}M${x} ${y + 14}L${x + 52} ${y + 54}L${x + 38} ${y + 72}M${x + 18} ${y + 46}L${x + 38} ${y + 18}`} {...YEL} />;
}

function TwistedBeam() {
  const upper = "118,790 180,757 240,732 300,712 400,685 520,656 640,622 740,592 800,568 857,537 920,497 980,450 1040,395 1100,330 1170,255 1230,190 1300,135 1368,88";
  const under = "1460,106 1410,140 1380,172 1340,212 1290,275 1240,345 1200,400 1160,458 1110,525 1070,575 1020,635 980,672 945,697 900,718 840,735 740,744 620,745 520,740 410,741 330,755 260,775 205,795";
  const frontHigh = "900,718 840,735 740,744 620,745 520,740 410,741 330,755 260,775 205,795";
  const frontLow = "945,700 920,716 860,738 780,750 680,758 500,752 400,755 300,775 205,808";
  const webTop = "205,808 300,775 400,755 500,752 690,758";
  const diag = "690,758 600,805 480,860 350,910 240,955 170,990 122,1024";
  const low = "1460,342 1370,395 1300,450 1210,530 1120,605 1050,665 990,715 940,757 880,805 800,865 720,918 650,955 600,970 500,978 400,983 300,1003 205,1042";
  const lowEdge = "1455,332 1370,384 1300,438 1210,520 1120,597 1050,655 990,705 940,747 880,795 800,855 720,908 650,945 600,960 500,968 400,970 300,992 205,1034";
  const shape = curve(upper, under) + "Z";
  return (
    <g transform="translate(106 227) scale(.43367 .33333)">
      <defs>
        <linearGradient id="fl-top" gradientUnits="userSpaceOnUse" x1="200" y1="800" x2="1400" y2="150">
          {stops([[0, "#080c38"], [0.085, "#0c1844"], [0.17, "#0c4650"], [0.29, "#0e6012"], [0.4, "#3c6010"], [0.5, "#546010"], [0.6, "#3c6210"], [0.69, "#0e6410"], [0.76, "#0e6428"], [0.82, "#0c5860"], [0.9, "#0c2c54"], [0.95, "#0a1848"], [1, "#080c40"]])}
        </linearGradient>
        <linearGradient id="fl-low" gradientUnits="userSpaceOnUse" x1="200" y1="1000" x2="1450" y2="330">
          {stops([[0, "#080c30"], [0.097, "#0c3034"], [0.2, "#0c3c14"], [0.29, "#2c5010"], [0.37, "#4c6010"], [0.477, "#586c10"], [0.553, "#3c7810"], [0.632, "#0c7c1c"], [0.705, "#0c7850"], [0.75, "#0c6870"], [0.86, "#0c3054"], [1, "#080a38"]])}
        </linearGradient>
        <linearGradient id="web" gradientUnits="userSpaceOnUse" x1="120" y1="920" x2="640" y2="790">
          {stops([[0, "#0a0a64"], [0.25, "#0a1464"], [0.5, "#0c3060"], [0.7, "#0c4850"], [0.85, "#0a3c2c"], [1, "#082c10"]])}
        </linearGradient>
        <linearGradient id="web-far" gradientUnits="userSpaceOnUse" x1="1378" y1="220" x2="1180" y2="440">
          {stops([[0, "#0a0a68"], [0.5, "#0a1064"], [1, "#0c3058"]])}
        </linearGradient>
        <radialGradient id="hot" cx="50%" cy="50%" r="50%">
          <stop offset="0" stopColor="#74140a" />
          <stop offset=".35" stopColor="#70200c" stopOpacity=".85" />
          <stop offset="1" stopColor="#603010" stopOpacity="0" />
        </radialGradient>
        <clipPath id="clip-top"><path d={shape} /></clipPath>
        <clipPath id="clip-low">
          <path d={curve(diag, rev(low), "1460,330 1380,325", "1160,458 1110,500 1000,560 900,680", "860,720 690,740") + "Z"} />
        </clipPath>
      </defs>

      {[0, 30, 60, 90].map((d) => <Support key={d} x={1368 + d} y={38} />)}
      {[0, 30, 60, 90].map((d) => <Support key={d} x={1368 + d} y={286} />)}
      <Support x={1366} y={116} />
      <Support x={1366} y={198} />

      <path d={curve("1380,325 1380,172", "1380,172 1340,212 1290,275 1240,345 1200,400 1160,458") + "Z"} fill="url(#web-far)" />
      <g clipPath="url(#clip-low)">
        <rect x="100" y="300" width="1400" height="760" fill="url(#fl-low)" />
        <ellipse cx="760" cy="925" rx="270" ry="95" fill="url(#hot)" transform="rotate(-34 760 925)" />
      </g>
      <path d={curve("120,800 205,808", webTop, diag) + "Z"} fill="url(#web)" />
      <path d="M114 795H122V1024L205 1032V1042L114 1036Z" fill="#0a10e0" />
      <path d={curve(frontLow, rev(frontHigh)) + "Z"} fill="url(#fl-top)" />
      <g clipPath="url(#clip-top)">
        <rect x="100" y="60" width="1400" height="760" fill="url(#fl-top)" />
        <ellipse cx="945" cy="710" rx="300" ry="120" fill="url(#hot)" transform="rotate(-34 945 710)" />
        <path d="M795 630L812 680L800 668ZM815 615L836 668L820 655ZM835 610L850 650L838 640Z" fill="#4a5410" fillOpacity=".6" />
      </g>
      <path d="M120 797L205 797V806L122 806Z" fill="#0a10e0" />

      <path d={shape.slice(0, -1)} {...LINE} />
      <path d={curve(frontLow)} {...LINE} />
      <path d={curve("1460,100 1375,178 1330,215 1285,268 1235,340 1195,398")} {...LINE} strokeWidth={1} />
      <path d={curve(diag)} {...LINE} strokeWidth={1} />
      <path d={curve("1380,325 1460,330", low)} {...LINE} />
      <path d={curve(lowEdge)} {...LINE} strokeWidth={1} />
      <path d="M845 543L933 702M857 537L945 695M1380 172V325L1160 458M118 790V1038L205 1042M122 1024L205 1030" {...LINE} strokeWidth={1} />

      {[0, 30, 60, 90].map((d, i) => (
        <path key={d} d={`M${733 + d} ${369 + i * 2}L${748 + d} ${361 + i * 2}V${434 + i * 2}L${738 + d} ${442 + i * 2}H${733 + d}Z`} fill="#ff4040" />
      ))}

      {[0, 30, 60, 90].map((d) => <Support key={d} x={62 + d} y={775} />)}
      <Support x={64} y={856} />
      <Support x={64} y={940} />
      {[0, 30, 60, 90].map((d) => <Support key={d} x={62 + d} y={1022} />)}
    </g>
  );
}

const LABEL = "font-['Liberation_Sans',sans-serif] text-[12px]";

function AxesA() {
  return (
    <g className={LABEL}>
      <path d="M64 154V115" stroke="#1010a8" strokeWidth="3" />
      <path d="M64 106L59 120H69Z" fill="#1010a8" />
      <path d="M64 154L95 158" stroke="#10c010" strokeWidth="3" />
      <path d="M107 159L94 153V163Z" fill="#18c818" />
      <path d="M64 154L50 158" stroke="#801010" strokeWidth="3" />
      <path d="M41 160L50 154L52 162L45 164Z" fill="#d01010" />
      <text x="44" y="147" fill="#e04040">X</text>
      <text x="58" y="114" fill="#3838d8">Z</text>
      <text x="102" y="144" fill="#30d030">Y</text>
    </g>
  );
}
function AxesB() {
  return (
    <g className={LABEL}>
      <path d="M64 154V118" stroke="#c01010" strokeWidth="3" />
      <path d="M64 106L59 119H69Z" fill="#b01010" />
      <path d="M64 154L32 153" stroke="#1010a8" strokeWidth="3" />
      <path d="M18 152L32 147V157Z" fill="#0c0c80" />
      <path d="M64 154L76 150" stroke="#0a4a0a" strokeWidth="3" />
      <circle cx="76" cy="149" r="5" fill="#10e810" />
      <text x="50" y="111" fill="#e04040">X</text>
      <text x="24" y="138" fill="#3838d8">Z</text>
      <text x="65" y="147" fill="#30d030">Y</text>
    </g>
  );
}

function Plot({ scale, values, children, axes }: { scale: string; values: string[]; children: ReactNode; axes: ReactNode }) {
  return (
    <main className="relative min-h-0 flex-1 overflow-hidden border-t-2 border-l-2 border-[#585858] bg-white">
      <div className="pt-2 pl-[15px] font-['Liberation_Sans',sans-serif] text-[14px] leading-4 font-bold">
        <p>Úkol: "Studie_0"</p>
        <p>Deformace, velikost, milimetry</p>
        <p>Deformační měřítko: {scale}</p>
      </div>
      <svg className="absolute inset-0 h-full w-full" role="img" aria-label="Deformovaný tvar nosníku">
        <defs>
          <linearGradient id="legend" x1="0" y1="0" x2="0" y2="1">
            {stops([[0, "#ff0000"], [0.25, "#ffff00"], [0.5, "#00ff00"], [0.75, "#00ffff"], [1, "#0000ff"]])}
          </linearGradient>
        </defs>
        <rect x="14.500" y="75.500" width="11" height="644" fill="url(#legend)" stroke="#000" />
        <path d="M15 76.500H25" stroke="#fff" />
        {values.map((v, i) => (
          <g key={v} className={LABEL}>
            {i > 0 && i < 8 && <path d={`M24 ${77 + i * 80}.5H30`} stroke="#000" />}
            <text x="33" y={i === 0 ? 79 : i === 8 ? 725 : 80 + i * 80}>{v}</text>
          </g>
        ))}
        {children}
        <g transform="translate(0 640)">{axes}</g>
      </svg>
    </main>
  );
}

/* ---------- application window ---------- */

type Study = { mesh: string; scale: string; values: string[]; bottom: ReactNode; drawing: ReactNode; axes: ReactNode };

function AppWindow({ study, className }: { study: Study; className: string }) {
  return (
    <div className={"flex min-w-0 flex-1 flex-col border border-t-[#d4d0c8] border-r-[#404040] border-b-[#404040] border-l-[#d4d0c8] " + className}>
      <div className="flex min-h-0 flex-1 flex-col border border-t-white border-r-[#808080] border-b-[#808080] border-l-white bg-[#d4d0c8] p-px">
        <TitleBar />
        <div className="flex min-h-0 flex-1 flex-col bg-linear-to-r from-[#d4d0c8] to-[#f5f4f2] pt-px">
          <nav className="flex h-6 items-center gap-px">
            <Grip rows={3} />
            {MENU.map((m) => (
              <button key={m} type="button" className="px-[7px] text-[11px] leading-5 whitespace-nowrap">{m}</button>
            ))}
          </nav>
          <div className={"flex h-[33px] items-stretch rounded-l-xs pl-[2px] " + BAR}>
            <Grip rows={6} />
            <div className="flex items-center">
              {MAIN_TOOLS.map((t, i) => (t.sep ? <i key={i} className="mr-[3px] ml-[2px] h-[22px] w-px bg-[#a6a49e]" /> : <ToolButton key={i} t={t} />))}
            </div>
            <Overflow />
          </div>
          <FilterBar />

          <div className="flex min-h-0 flex-1 pt-px">
            <aside className="flex w-60 shrink-0 flex-col bg-[#d4d0c8]">
              <PanelCaption title="Studie" />
              <StudyTree mesh={study.mesh} />
              <HScroll />
              <i className="h-[3px] bg-white" />
              <DockTabs />
              {study.bottom}
            </aside>
            <div className="mt-[2px] ml-[5px] w-[25px] shrink-0 bg-linear-to-r from-[#f5f4f2] to-[#cbc8c0] pt-1 pl-1">
              <span className="flex gap-[2px]">
                {[0, 1, 2, 3].map((i) => <i key={i} className="size-[2px] bg-[#a09e98]" />)}
              </span>
            </div>
            <div className="flex min-w-0 flex-1 flex-col">
              <DocTabs />
              <div className="flex min-h-0 flex-1 border border-[#808080] bg-[#d4d0c8] p-px">
                <Plot scale={study.scale} values={study.values} axes={study.axes}>{study.drawing}</Plot>
              </div>
            </div>
            <div className="flex w-[35px] shrink-0 flex-col bg-[#f5f4f2]">
              <div role="toolbar" aria-label="Pohled" className="mt-[2px] flex flex-col items-center rounded-t-xs bg-linear-to-r from-[#f5f4f2] to-[#d0ccc4]">
                <span className="flex h-[9px] items-center gap-[2px]">
                  {[0, 1, 2, 3, 4, 5].map((i) => <i key={i} className="size-[2px] bg-[#a09e98]" />)}
                </span>
                {VIEW_TOOLS.map((t, i) => (t.sep ? <i key={i} className="mt-[2px] mb-[3px] h-px w-[22px] bg-[#a6a49e]" /> : <ToolButton key={i} t={t} />))}
                <button type="button" aria-label="Další tlačítka pohledu" className="mt-[3px] flex h-[10px] w-full items-center justify-end bg-linear-to-r from-[#dcdad6] to-[#808080] pr-1">
                  <svg width="7" height="6" viewBox="0 0 7 6"><path d="M0 0H1V6H0ZM3 0L7 3L3 6Z" /></svg>
                </button>
              </div>
            </div>
          </div>

          <footer className="flex h-[22px] shrink-0 items-center bg-[#d4d0c8] pl-1 text-[11px]">
            <span className="flex-1">&gt;</span>
            <span className="h-[18px] w-[498px] border border-[#dedbd4]" />
            <span className="ml-[2px] h-[18px] w-[103px] border border-[#dedbd4]" />
            <span className="ml-[2px] h-[18px] w-[103px] border border-[#dedbd4]" />
            <svg width="32" height="18" viewBox="0 0 32 18" aria-hidden="true"><path d="M19 17L31 5M23 17L31 9M27 17L31 13" stroke="#808080" strokeWidth="2" /></svg>
          </footer>
        </div>
      </div>
    </div>
  );
}

const STUDIES: Study[] = [
  {
    mesh: "Síť_1",
    scale: "87.27",
    values: ["1.146", "1.003", "0.8594", "0.7161", "0.5729", "0.4297", "0.2865", "0.1432", "0"],
    bottom: <VariablesPanel />,
    drawing: <SideBeam />,
    axes: <AxesA />,
  },
  {
    mesh: "Síť_2",
    scale: "101.33",
    values: ["1.149", "1.005", "0.8615", "0.7179", "0.5743", "0.4308", "0.2872", "0.1436", "0"],
    bottom: <DiagnosticsPanel />,
    drawing: <TwistedBeam />,
    axes: <AxesB />,
  },
];

export default function App() {
  return (
    <div className="flex h-screen bg-[#a2a2a0] font-['DejaVu_Sans_Condensed','DejaVu_Sans',sans-serif] text-black">
      <i className="w-[2px] shrink-0 bg-[linear-gradient(#e8e8e8_0_95px,#2f8fc8_95px_238px,#e4ecf2_238px)]" />
      <AppWindow study={STUDIES[0]} className="mt-1" />
      <i className="w-1 shrink-0 bg-[linear-gradient(#d8d4cc_0_80px,#2c62a8_80px_238px,#f4f4f4_238px)]" />
      <AppWindow study={STUDIES[1]} className="mt-[2px] mb-[2px]" />
    </div>
  );
}
